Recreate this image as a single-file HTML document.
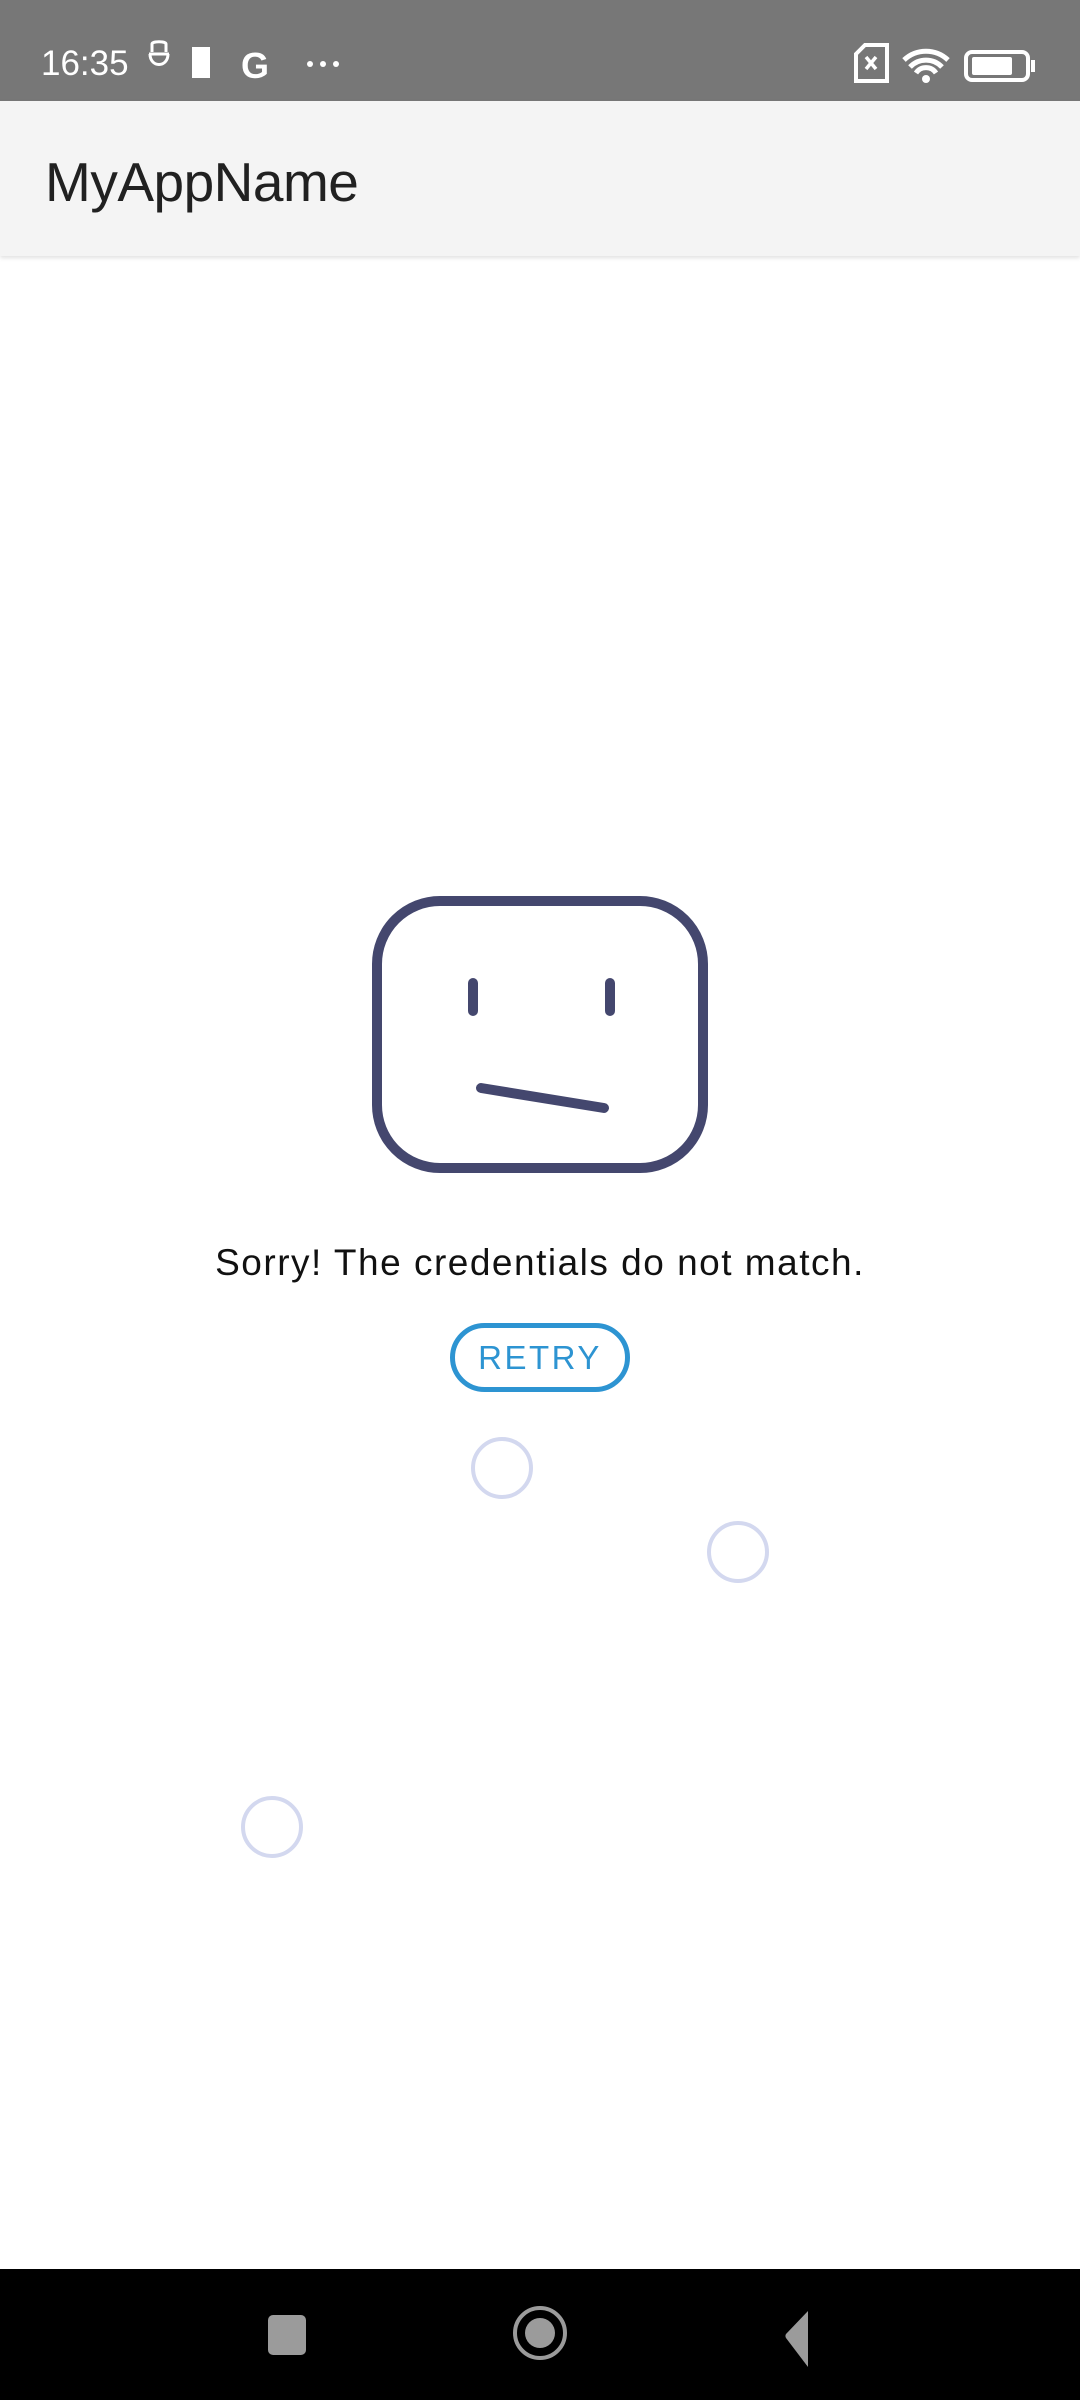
<!DOCTYPE html>
<html><head><meta charset="utf-8"><style>
html,body{margin:0;padding:0;width:1080px;height:2400px;overflow:hidden;background:#fff;font-family:"Liberation Sans",sans-serif;position:relative}
.sb{position:absolute;left:0;top:0;width:1080px;height:101px;background:#777}
.ab{position:absolute;left:0;top:101px;width:1080px;height:155px;background:#f4f4f4;box-shadow:0 2px 4px rgba(0,0,0,.12)}
.title{position:absolute;left:45px;top:146px;font-size:55px;color:#212121;letter-spacing:-0.5px;line-height:72px}
.time{position:absolute;left:41px;top:44px;font-size:35px;color:#fff;line-height:40px}
.msg{position:absolute;left:0;width:1080px;top:1240px;text-align:center;font-size:37px;color:#111;line-height:46px;letter-spacing:1.5px}
.btn{position:absolute;left:450px;top:1323px;width:170px;height:59px;border:5px solid #2d94d2;border-radius:36px;color:#2d94d2;font-size:33px;text-align:center;line-height:59px;letter-spacing:2.5px}
.nav{position:absolute;left:0;top:2269px;width:1080px;height:131px;background:#000}
</style></head><body>
<div class="sb">
<div class="time">16:35</div>
<svg style="position:absolute;left:0;top:0" width="1080" height="101">
<g fill="none" stroke="#fff" stroke-width="3"><path d="M149 54h20M150 54c0 14 18 14 18 0M152 52v-8c0-3 14-3 14 0v8"/></g>
<rect x="192" y="50" width="18" height="31" fill="#fff" transform="translate(0,-3)"/>
<text x="241" y="78" font-size="36" font-weight="bold" fill="#fff" font-family="Liberation Sans">G</text>
<circle cx="310" cy="64" r="3" fill="#fff"/><circle cx="323" cy="64" r="3" fill="#fff"/><circle cx="336" cy="64" r="3" fill="#fff"/>
<path d="M856 54l9-9h22v36h-31z" fill="none" stroke="#fff" stroke-width="4"/>
<path d="M866 57l10 12M876 57l-10 12" stroke="#fff" stroke-width="3.5"/>
<path d="M904 60a32 32 0 0 1 44 0M910 67a22 22 0 0 1 32 0M916 73a12 12 0 0 1 20 0" fill="none" stroke="#fff" stroke-width="5"/>
<circle cx="926" cy="79" r="4" fill="#fff"/>
<rect x="966" y="52" width="62" height="28" rx="6" fill="none" stroke="#fff" stroke-width="4"/>
<rect x="972" y="57" width="40" height="18" rx="2" fill="#fff"/>
<rect x="1031" y="60" width="4" height="12" fill="#fff"/>
</svg>
</div>
<div class="ab"></div>
<div class="title">MyAppName</div>
<svg style="position:absolute;left:0;top:0" width="1080" height="2269">
<rect x="377" y="901" width="326" height="267" rx="63" fill="none" stroke="#44476e" stroke-width="10"/>
<path d="M473 983v28M610 983v28" stroke="#44476e" stroke-width="10" stroke-linecap="round"/>
<path d="M481 1088L604 1108" stroke="#44476e" stroke-width="10" stroke-linecap="round"/>
<g fill="none" stroke="#d3d8ef" stroke-width="4">
<circle cx="502" cy="1468" r="29"/><circle cx="738" cy="1552" r="29"/><circle cx="272" cy="1827" r="29"/>
</g>
</svg>
<div class="msg">Sorry! The credentials do not match.</div>
<div class="btn">RETRY</div>
<div class="nav">
<svg width="1080" height="131">
<rect x="268" y="46" width="38" height="40" rx="5" fill="#9b9b9b"/>
<circle cx="540" cy="64" r="25" fill="none" stroke="#9b9b9b" stroke-width="4"/>
<circle cx="540" cy="64" r="15" fill="#9b9b9b"/>
<path d="M808 42v56l-22-29a4 4 0 0 1 0-4z" fill="#9b9b9b"/>
</svg>
</div>
</body></html>
